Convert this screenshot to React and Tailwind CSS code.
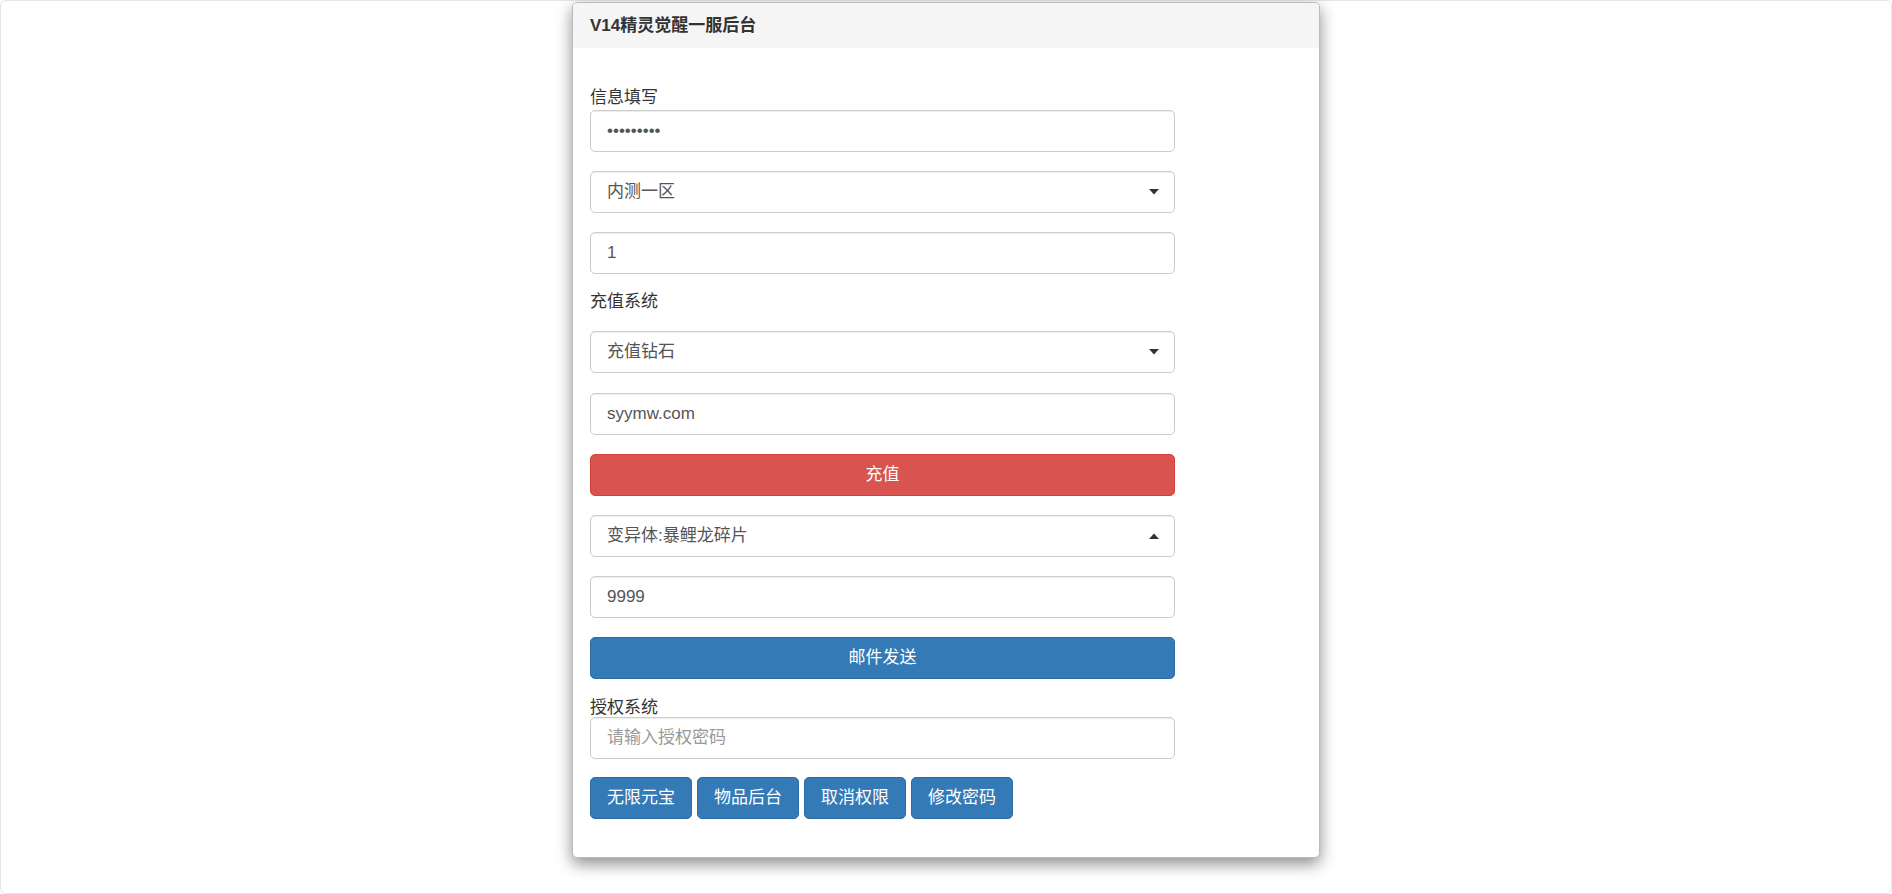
import React from "react";

const font = {
  fontFamily:
    '"Liberation Sans", Arial, "Noto Sans CJK SC", sans-serif',
};

function Caret({ up }) {
  return (
    <svg width="12" height="8" viewBox="0 0 12 8" className="shrink-0">
      {up ? (
        <path d="M1 7 L6 1.5 L11 7 Z" fill="#333" />
      ) : (
        <path d="M1 1 L6 6.5 L11 1 Z" fill="#333" />
      )}
    </svg>
  );
}

function TextInput({ value, type = "text", placeholder }) {
  return (
    <input
      type={type}
      defaultValue={value}
      placeholder={placeholder}
      className="block w-[585px] h-[42px] px-[16px] rounded-[5px] border border-[#ccc] bg-white text-[17px] text-[#555] placeholder:text-[#999] shadow-[inset_0_1px_1px_rgba(0,0,0,0.075)] outline-none"
      style={font}
    />
  );
}

function Select({ label, up }) {
  return (
    <div className="flex items-center justify-between w-[585px] h-[42px] pl-[16px] pr-[14px] rounded-[5px] border border-[#ccc] bg-white text-[17px] text-[#555] shadow-[inset_0_1px_1px_rgba(0,0,0,0.075)]">
      <span>{label}</span>
      <Caret up={up} />
    </div>
  );
}

function Btn({ children, color = "blue", full }) {
  const c =
    color === "red"
      ? "bg-[#d9534f] border-[#d43f3a]"
      : "bg-[#337ab7] border-[#2e6da4]";
  return (
    <button
      type="button"
      className={
        "h-[42px] rounded-[5px] border text-white text-[17px] " +
        c +
        (full ? " w-[585px]" : " px-[16px]")
      }
      style={font}
    >
      {children}
    </button>
  );
}

export default function App() {
  return (
    <div
      className="w-[1892px] h-[894px] bg-white border border-[#e6e6e6] rounded-[6px] flex justify-center"
      style={font}
    >
      <div className="w-[748px] h-[856px] mt-[1px] bg-white rounded-[5px] border border-[#bbb] shadow-[0_6px_16px_rgba(0,0,0,0.45)] overflow-hidden text-[#333]">
        <div className="h-[45px] bg-[#f5f5f5] flex items-center px-[17px] text-[17px] font-bold">
          V14精灵觉醒一服后台
        </div>
        <div className="px-[17px] pt-[38px]">
          <div className="text-[17px] leading-[24px]">信息填写</div>
          <div className="flex flex-col gap-[19px]">
            <TextInput type="password" value="123456789" />
            <Select label="内测一区" />
            <TextInput value="1" />
          </div>
          <div className="text-[17px] leading-[24px] mt-[16px] mb-[17px]">
            充值系统
          </div>
          <div className="flex flex-col gap-[19px]">
            <Select label="充值钻石" />
            <div className="flex flex-col gap-[19px] pt-[1px]">
              <TextInput value="syymw.com" />
              <Btn color="red" full>
                充值
              </Btn>
              <Select label="变异体:暴鲤龙碎片" up />
              <TextInput value="9999" />
              <Btn full>邮件发送</Btn>
            </div>
          </div>
          <div className="text-[17px] leading-[24px] mt-[17px] -mb-[3px]">
            授权系统
          </div>
          <TextInput placeholder="请输入授权密码" />
          <div className="flex gap-[5px] mt-[18px]">
            <Btn>无限元宝</Btn>
            <Btn>物品后台</Btn>
            <Btn>取消权限</Btn>
            <Btn>修改密码</Btn>
          </div>
        </div>
      </div>
    </div>
  );
}
